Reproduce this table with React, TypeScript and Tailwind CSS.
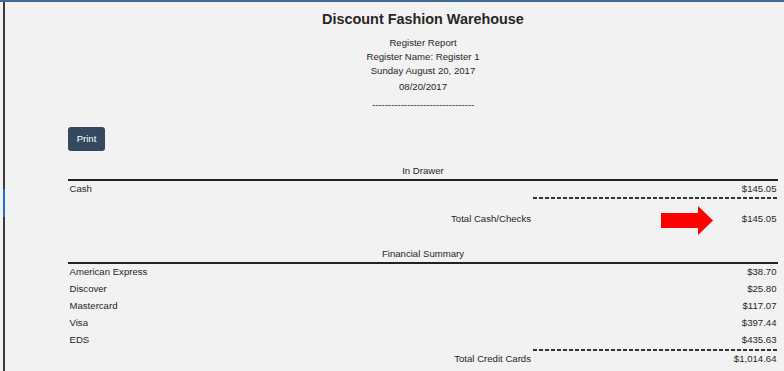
import React from "react";

const font = { fontFamily: '"Liberation Sans", Arial, sans-serif' };

function Dash() {
  return (
    <div className="flex justify-end">
      <div className="w-[245px] h-[2px] bg-[repeating-linear-gradient(90deg,#333_0px,#333_4px,transparent_4px,transparent_6px)]" />
    </div>
  );
}

function Row({ label, amount }: { label: string; amount: string }) {
  return (
    <div className="flex h-[17px] items-center">
      <div className="flex-1 pl-[1.5px]">{label}</div>
      <div className="w-[245px] text-right pr-[1.5px]">{amount}</div>
    </div>
  );
}

function Arrow() {
  return (
    <svg width="52" height="29" viewBox="0 0 52 29" className="absolute left-[128px] top-[-5px]">
      <rect x="0" y="7" width="38" height="15" fill="#ff0000" />
      <polygon points="37,0 52,14.5 37,29" fill="#ff0000" />
    </svg>
  );
}

function TotalRow({ label, amount, arrow }: { label: string; amount: string; arrow?: boolean }) {
  return (
    <div className="flex h-[17px] items-center">
      <div className="flex-1 text-right pr-[2px]">{label}</div>
      <div className="w-[245px] text-right pr-[1.5px] relative h-full flex items-center justify-end">
        {arrow && <Arrow />}
        {amount}
      </div>
    </div>
  );
}

function SectionHeader({ title }: { title: string }) {
  return (
    <>
      <div className="h-[16px] leading-[16px] text-center">{title}</div>
      <div className="h-[2px] bg-[#222]" />
    </>
  );
}

export default function App() {
  return (
    <div className="min-h-[371px] bg-[#f2f2f2] text-[#262626] text-[9.6px] flex flex-col" style={font}>
      <div className="h-[2px] bg-[#3e6891]" />
      <div className="flex flex-1">
        <div className="w-[3px]" />
        <div className="w-[2px] flex flex-col">
          <div className="h-[187px] bg-[#3a3a3a]" />
          <div className="h-[28px] bg-[#1f6fd1]" />
          <div className="flex-1 bg-[#3a3a3a]" />
        </div>
        <div className="flex-1 pl-[63px] pr-[6px]">
          <div className="mt-[7px] h-[20px] leading-[20px] text-center font-bold text-[14.4px]">
            Discount Fashion Warehouse
          </div>
          <div className="mt-[7px] text-center">
            <div className="h-[14px] leading-[14px]">Register Report</div>
            <div className="h-[14px] leading-[14px]">Register Name: Register 1</div>
            <div className="h-[14px] leading-[14px]">Sunday August 20, 2017</div>
            <div className="mt-[2px] h-[14px] leading-[14px]">08/20/2017</div>
            <div className="mt-[4px] h-[14px] leading-[14px]">--------------------------------</div>
          </div>
          <div className="mt-[15px]">
            <button className="w-[37px] h-[24px] rounded-[3px] bg-[#34495e] text-white text-[9.6px] leading-[24px]">
              Print
            </button>
          </div>
          <div className="mt-[12px]">
            <SectionHeader title="In Drawer" />
            <div className="h-[16px] flex items-center">
              <div className="flex-1 pl-[1.5px]">Cash</div>
              <div className="w-[245px] text-right pr-[1.5px]">$145.05</div>
            </div>
            <Dash />
            <div className="mt-[12px]">
              <TotalRow label="Total Cash/Checks" amount="$145.05" arrow />
            </div>
          </div>
          <div className="mt-[18px]">
            <SectionHeader title="Financial Summary" />
            <Row label="American Express" amount="$38.70" />
            <Row label="Discover" amount="$25.80" />
            <Row label="Mastercard" amount="$117.07" />
            <Row label="Visa" amount="$397.44" />
            <Row label="EDS" amount="$435.63" />
            <Dash />
            <TotalRow label="Total Credit Cards" amount="$1,014.64" />
          </div>
        </div>
      </div>
    </div>
  );
}
